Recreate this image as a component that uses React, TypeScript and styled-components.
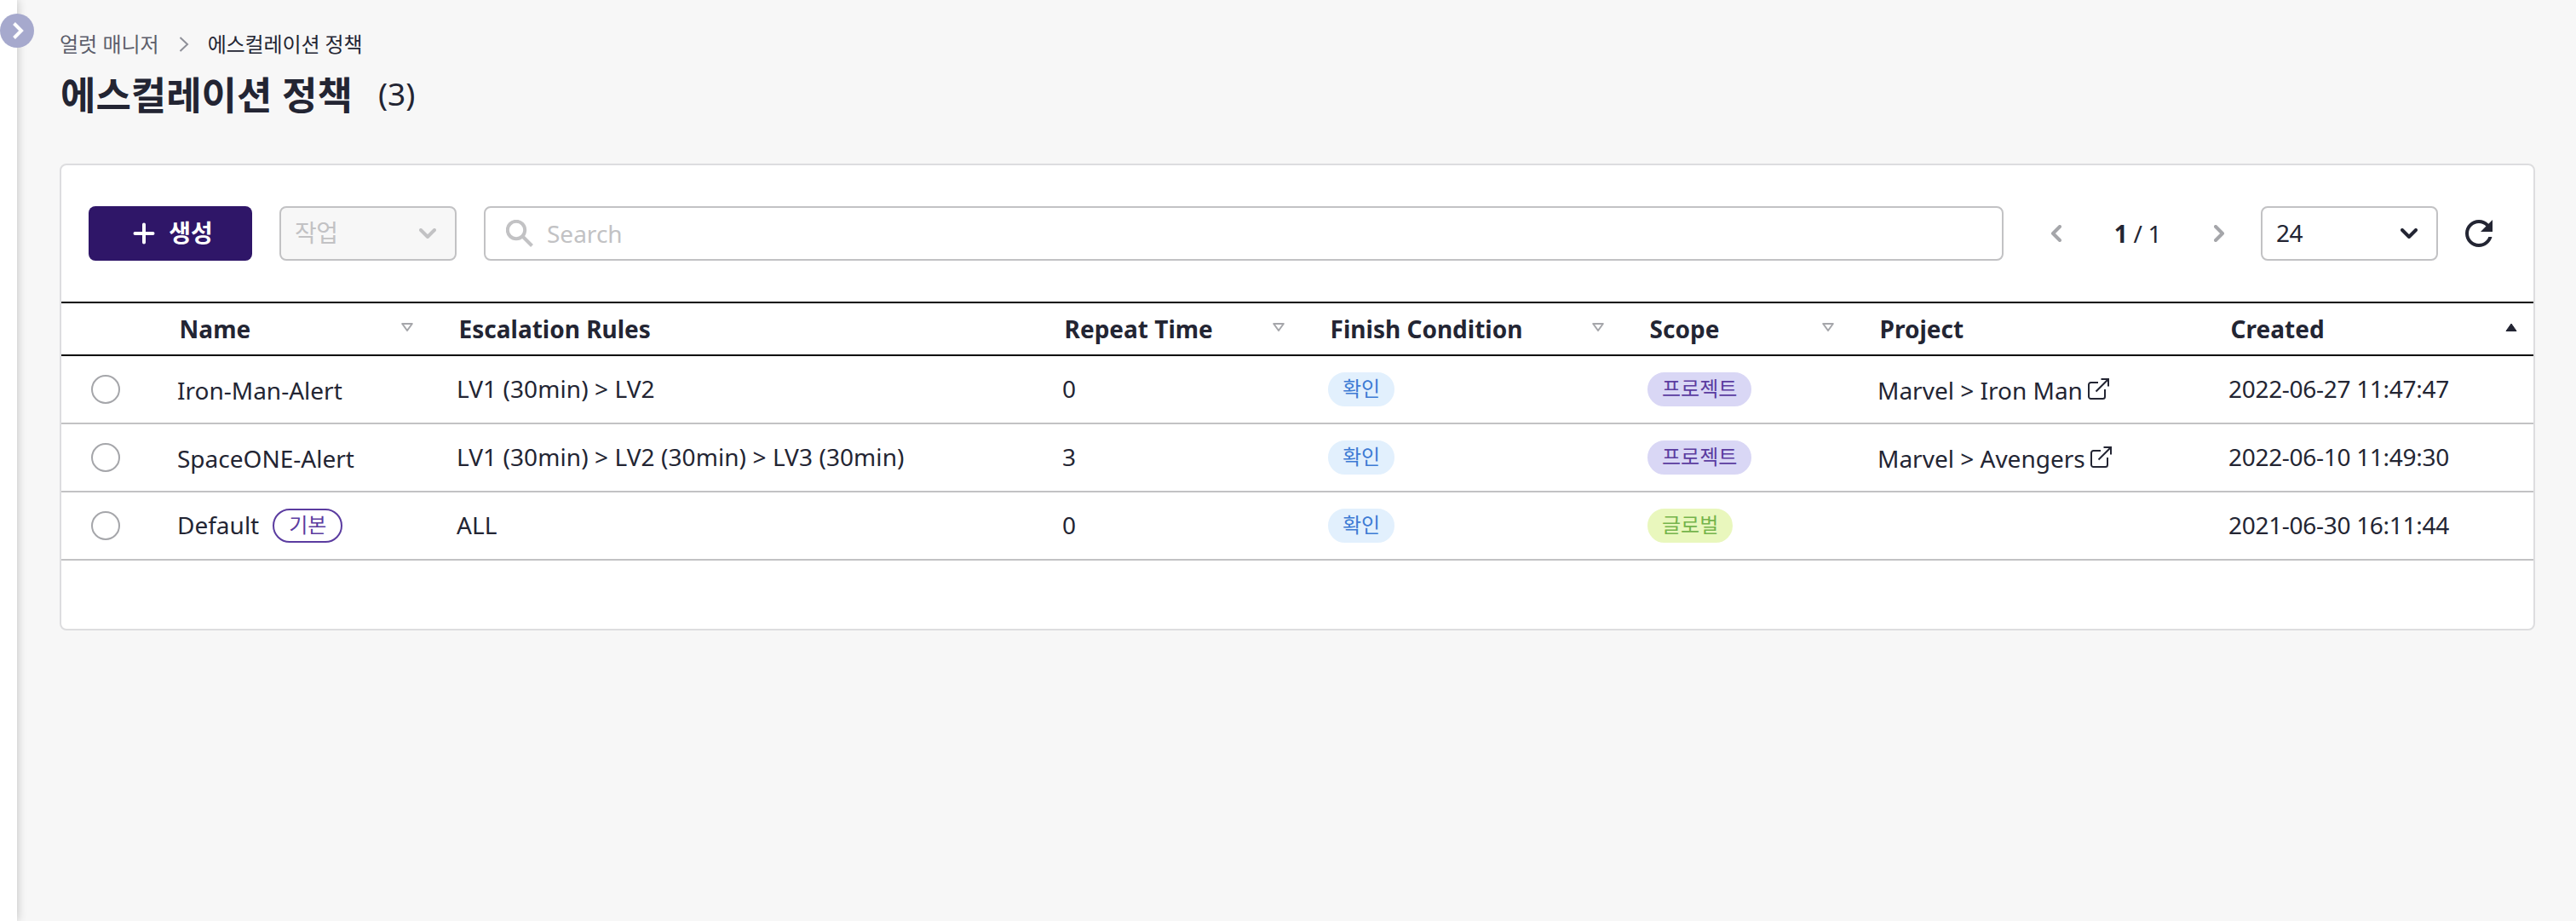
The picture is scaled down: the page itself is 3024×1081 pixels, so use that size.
import React from 'react';
import styled, { createGlobalStyle } from 'styled-components';

const ink = '#232533';

const GlobalStyle = createGlobalStyle`
  * { box-sizing: border-box; }
  body {
    margin: 0;
    background: #f7f7f7;
    color: ${ink};
    font-family: "Noto Sans", "Noto Sans CJK KR", sans-serif;
    font-size: 28px;
    line-height: 40px;
  }
`;

const Page = styled.div`
  display: flex;
  min-height: 1081px;
`;

const SideStrip = styled.aside`
  position: relative;
  flex: 0 0 20px;
  background: #fff;
  box-shadow: 0 0 12px rgba(0, 0, 0, 0.24);
`;

const ExpandButton = styled.button`
  position: absolute;
  top: 16px;
  left: 0;
  width: 40px;
  height: 40px;
  padding: 0;
  border: 0;
  border-radius: 50%;
  background: #a6a9cd;
  svg { display: block; }
`;

const Main = styled.main`
  flex: 1;
  min-width: 0;
  padding: 34px 48px 0 50px;
`;

const Breadcrumb = styled.nav`
  display: flex;
  align-items: center;
  height: 36px;
  font-size: 24px;
  line-height: 36px;
`;

const Crumb = styled.span<{ $current?: boolean }>`
  color: ${(p) => (p.$current ? ink : '#5c5e6b')};
  letter-spacing: ${(p) => (p.$current ? '-0.12px' : 'normal')};
`;

const CrumbArrow = styled.svg`
  margin: 0 22px 0 23px;
`;

const TitleRow = styled.header`
  display: flex;
  align-items: center;
  height: 70px;
  margin-top: 7px;
`;

const Title = styled.h1`
  margin: 0;
  padding-left: 1px;
  font-size: 45px;
  line-height: 70px;
  font-weight: 700;
`;

const Count = styled.span`
  margin-left: 30px;
  padding-bottom: 4px;
  font-size: 37px;
`;

const Card = styled.section`
  height: 548px;
  margin-top: 45px;
  border: 2px solid #dddddf;
  border-radius: 8px;
  background: #fff;
`;

const Toolbar = styled.div`
  display: flex;
  align-items: center;
  height: 160px;
  padding: 0 48px 0 32px;
`;

const CreateButton = styled.button`
  display: flex;
  align-items: center;
  justify-content: center;
  gap: 16px;
  width: 192px;
  height: 64px;
  padding: 0 0 2px 6px;
  border: 0;
  border-radius: 8px;
  background: #2f1668;
  color: #fff;
  font: inherit;
  font-weight: 700;
  svg { margin-top: 2px; }
`;

const SelectBox = styled.div<{ $disabled?: boolean }>`
  display: flex;
  align-items: center;
  justify-content: space-between;
  width: 208px;
  height: 64px;
  padding: 0 22px 0 16px;
  border: 2px solid #c2c2c4;
  border-radius: 8px;
  background: ${(p) => (p.$disabled ? '#f7f7f7' : '#fff')};
  color: ${(p) => (p.$disabled ? '#c2c2c4' : ink)};
`;

const SelectLabel = styled.span`
  padding-bottom: 3px;
  letter-spacing: -0.4px;
`;

const ActionSelect = styled(SelectBox)`
  margin: 0 32px;
`;

const SearchBox = styled.div`
  display: flex;
  align-items: center;
  gap: 16px;
  flex: 1;
  height: 64px;
  padding-left: 24px;
  border: 2px solid #c2c2c4;
  border-radius: 8px;
  color: #c2c2c4;
`;

const Pager = styled.div`
  display: flex;
  align-items: center;
  justify-content: space-between;
  width: 205px;
  margin: 0 42px 0 55px;
  letter-spacing: -0.3px;
`;

const RefreshIcon = styled.svg`
  margin-left: 32px;
`;

const TableRow = styled.div`
  display: grid;
  grid-template-columns: 120px 328px 711px 312px 375px 270px 412px 1fr;
  align-items: center;
  height: 80px;
  border-bottom: 2px solid #c2c2c4;
`;

const HeadRow = styled(TableRow)`
  height: 64px;
  border-top: 2px solid #000;
  border-bottom: 2px solid #000;
  font-weight: 700;
`;

const HeadCell = styled.div`
  display: flex;
  align-items: center;
  justify-content: space-between;
  padding: 0 35px 0 18.6px;
  &:last-child { padding-right: 19px; }
`;

const SortIcon = styled.svg`
  margin-top: -5px;
`;

const Cell = styled.div<{ $drop?: boolean }>`
  display: flex;
  align-items: center;
  padding: ${(p) => (p.$drop ? '2px' : '0')} 16px 0;
  white-space: pre;
`;

const CellText = styled.span<{ $tracking?: number }>`
  padding-bottom: 3px;
  letter-spacing: ${(p) => p.$tracking ?? 0}px;
`;

const Radio = styled.span`
  width: 34px;
  height: 34px;
  margin-left: 19px;
  border: 2px solid #a5a6aa;
  border-radius: 50%;
`;

type Tone = 'blue' | 'violet' | 'green' | 'outline';

const tones: Record<Tone, { bg: string; fg: string; line: string }> = {
  blue: { bg: '#e2f0fd', fg: '#3d7bd4', line: '#e2f0fd' },
  violet: { bg: '#d9d7f5', fg: '#5b3ca0', line: '#d9d7f5' },
  green: { bg: '#e9f7bd', fg: '#75b44c', line: '#e9f7bd' },
  outline: { bg: '#fff', fg: '#5b3ca0', line: '#5b3ca0' },
};

const Badge = styled.span<{ $tone: Tone }>`
  height: 40px;
  padding: 0 15px;
  border: 2px solid ${(p) => tones[p.$tone].line};
  border-radius: 20px;
  background: ${(p) => tones[p.$tone].bg};
  color: ${(p) => tones[p.$tone].fg};
  font-size: 24px;
  line-height: 34px;
`;

const DefaultBadge = styled(Badge)`
  margin-left: 16px;
  padding: 0 17px;
`;

const LinkIcon = styled.svg`
  margin: -4px 0 0 6px;
`;

const Chevron = ({ d, w, h, color }: { d: string; w: number; h: number; color: string }) => (
  <svg width={w} height={h} viewBox={`0 0 ${w} ${h}`} fill="none" stroke={color} strokeWidth="4" strokeLinecap="round" strokeLinejoin="round">
    <path d={d} />
  </svg>
);

const columns = [
  { label: 'Name', sort: 'none' },
  { label: 'Escalation Rules' },
  { label: 'Repeat Time', sort: 'none' },
  { label: 'Finish Condition', sort: 'none' },
  { label: 'Scope', sort: 'none' },
  { label: 'Project' },
  { label: 'Created', sort: 'asc' },
];

const policies = [
  { name: 'Iron-Man-Alert', rules: 'LV1 (30min) > LV2', repeat: 0, scope: '프로젝트', project: 'Marvel > Iron Man', created: '2022-06-27 11:47:47' },
  { name: 'SpaceONE-Alert', rules: 'LV1 (30min) > LV2 (30min) > LV3 (30min)', repeat: 3, scope: '프로젝트', project: 'Marvel > Avengers', created: '2022-06-10 11:49:30' },
  { name: 'Default', isDefault: true, rules: 'ALL', repeat: 0, scope: '글로벌', project: '', created: '2021-06-30 16:11:44' },
];

export default function App() {
  return (
    <>
      <GlobalStyle />
      <Page>
        <SideStrip>
          <ExpandButton aria-label="expand">
            <svg width="40" height="40" viewBox="0 0 40 40" fill="none" stroke="#fff" strokeWidth="4">
              <path d="M16.5 11.5 25 20l-8.500 8.500" />
            </svg>
          </ExpandButton>
        </SideStrip>
        <Main>
          <Breadcrumb>
            <Crumb>얼럿 매니저</Crumb>
            <CrumbArrow width="12" height="18" viewBox="0 0 12 18" fill="none" stroke="#8e8f98" strokeWidth="2">
              <path d="M1.500 1 10 9l-8.500 8" />
            </CrumbArrow>
            <Crumb $current>에스컬레이션 정책</Crumb>
          </Breadcrumb>
          <TitleRow>
            <Title>에스컬레이션 정책</Title>
            <Count>(3)</Count>
          </TitleRow>
          <Card>
            <Toolbar>
              <CreateButton>
                <svg width="26" height="26" viewBox="0 0 26 26" stroke="#fff" strokeWidth="4" strokeLinecap="round">
                  <path d="M13 2.500v21M2.500 13h21" />
                </svg>
                생성
              </CreateButton>
              <ActionSelect $disabled>
                <SelectLabel>작업</SelectLabel>
                <Chevron w={20} h={12} d="M2 2l8 8 8-8" color="#c2c2c4" />
              </ActionSelect>
              <SearchBox>
                <svg width="32" height="32" viewBox="0 0 32 32" fill="none" stroke="#c2c2c4" strokeWidth="4">
                  <circle cx="12" cy="12" r="10.200" />
                  <path d="M19.500 19.500 30.500 30.500" />
                </svg>
                Search
              </SearchBox>
              <Pager>
                <Chevron w={13} h={20} d="M11 2 3 10l8 8" color="#a5a6aa" />
                <span><b>1</b> / 1</span>
                <Chevron w={13} h={20} d="M2 2l8 8-8 8" color="#a5a6aa" />
              </Pager>
              <SelectBox>
                <SelectLabel>24</SelectLabel>
                <Chevron w={20} h={12} d="M2 2l8 8 8-8" color={ink} />
              </SelectBox>
              <RefreshIcon width="32" height="32" viewBox="4 4 16 16" fill={ink}>
                <path d="M17.650 6.350C16.200 4.900 14.210 4 12 4c-4.420 0-7.990 3.580-7.990 8s3.570 8 7.990 8c3.730 0 6.840-2.550 7.730-6h-2.080c-.820 2.330-3.040 4-5.650 4-3.310 0-6-2.690-6-6s2.690-6 6-6c1.660 0 3.140.690 4.220 1.780L13 11h7V4z" />
              </RefreshIcon>
            </Toolbar>
            <HeadRow>
              <div />
              {columns.map((c) => (
                <HeadCell key={c.label}>
                  {c.label}
                  {c.sort && (
                    <SortIcon width="14" height="10" viewBox="0 0 14 10" strokeLinejoin="round">
                      {c.sort === 'asc'
                        ? <path d="M7 1 13 9.500H1z" fill={ink} stroke={ink} />
                        : <path d="M1.200 1h11.600L7 9z" fill="none" stroke="#a5a6aa" strokeWidth="2" />}
                    </SortIcon>
                  )}
                </HeadCell>
              ))}
            </HeadRow>
            {policies.map((p) => (
              <TableRow key={p.name}>
                <Cell><Radio /></Cell>
                {p.isDefault ? (
                  <Cell>
                    <CellText>{p.name}</CellText>
                    <DefaultBadge $tone="outline">기본</DefaultBadge>
                  </Cell>
                ) : (
                  <Cell $drop>{p.name}</Cell>
                )}
                <Cell><CellText $tracking={0.08}>{p.rules}</CellText></Cell>
                <Cell><CellText>{p.repeat}</CellText></Cell>
                <Cell><Badge $tone="blue">확인</Badge></Cell>
                <Cell><Badge $tone={p.scope === '글로벌' ? 'green' : 'violet'}>{p.scope}</Badge></Cell>
                <Cell $drop>
                  {p.project}
                  {p.project && (
                    <LinkIcon width="25" height="25" viewBox="0 0 25 25" fill="none" stroke={ink} strokeWidth="2">
                      <path d="M12 5H3.500A2.500 2.500 0 0 0 1 7.500v14A2.500 2.500 0 0 0 3.500 24h14a2.500 2.500 0 0 0 2.500-2.500V13" />
                      <path d="M15.500 1H24v8.500M24 1 9.500 15.500" />
                    </LinkIcon>
                  )}
                </Cell>
                <Cell><CellText $tracking={-0.3}>{p.created}</CellText></Cell>
              </TableRow>
            ))}
          </Card>
        </Main>
      </Page>
    </>
  );
}
